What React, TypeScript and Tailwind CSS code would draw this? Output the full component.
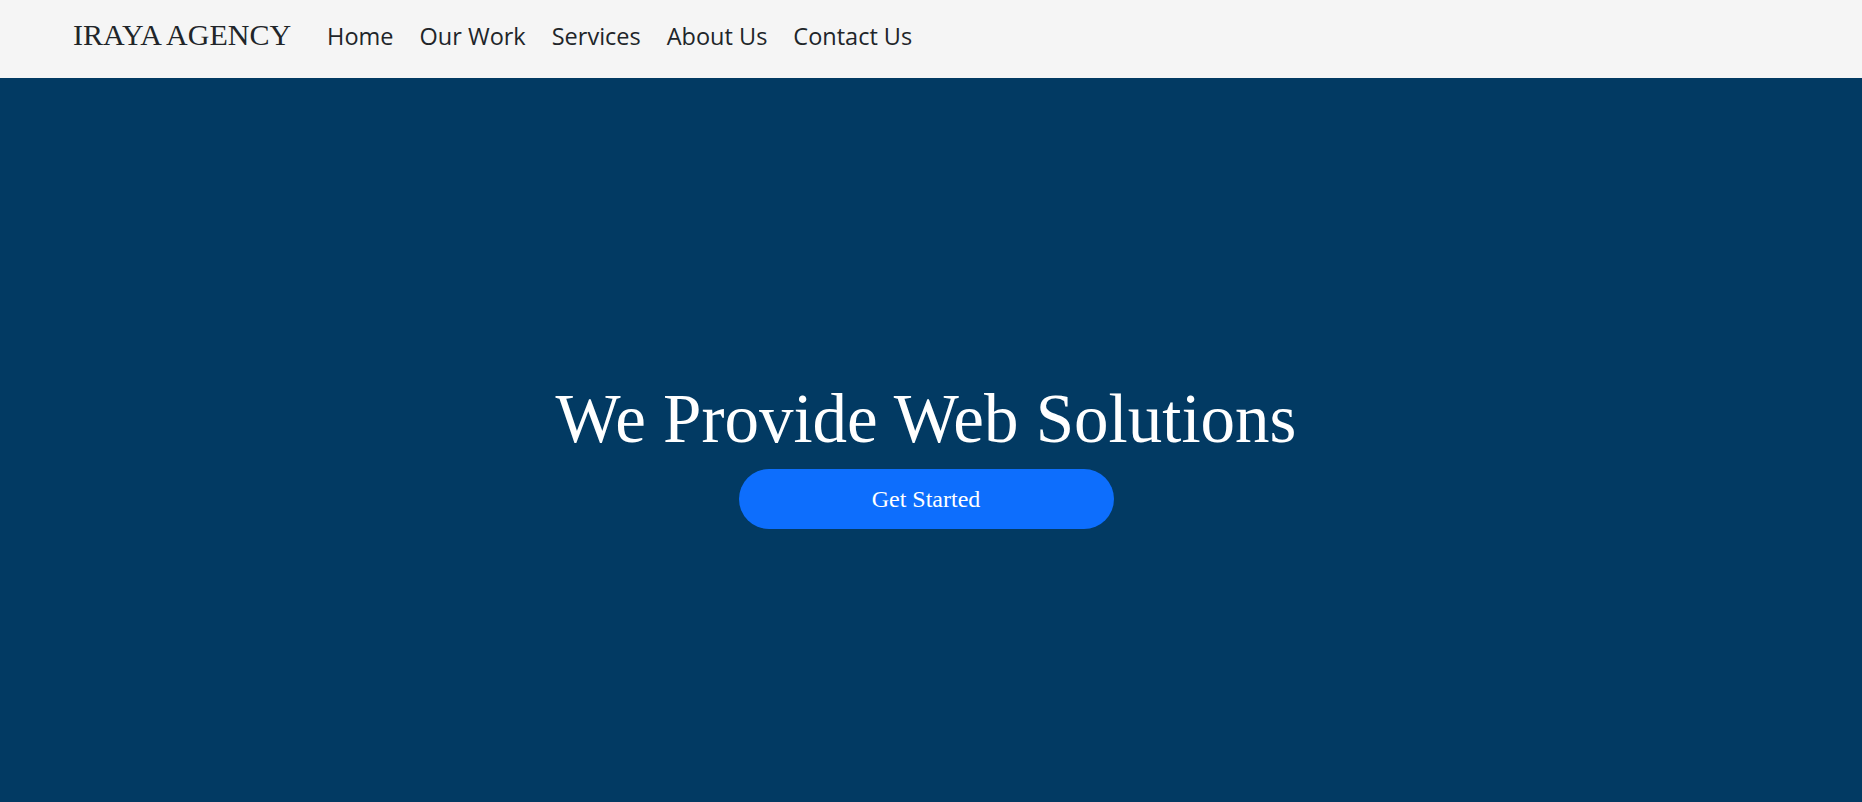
const links = ["Home", "Our Work", "Services", "About Us", "Contact Us"];

const App = () => {
  return (
    <div className="min-h-screen flex flex-col">
      <nav className="bg-[#f5f5f5] h-[78px] flex items-baseline pl-[73px] pt-[18px]">
        <a
          href="#"
          className="text-[30px] leading-[1.1] text-[#212529] font-['Liberation_Serif',serif]"
        >
          IRAYA AGENCY
        </a>
        <ul className="flex items-baseline gap-[26px] ml-[36px] font-['Open_Sans',sans-serif] text-[23.5px] text-[#212529]">
          {links.map((l) => (
            <li key={l}>
              <a href="#">{l}</a>
            </li>
          ))}
        </ul>
      </nav>

      <section className="bg-[#023a63] flex-1 h-[724px] flex flex-col items-center justify-center pt-[27px] pr-[10px]">
        <h1 className="text-white text-[69px] leading-[1.2] font-['Liberation_Serif',serif]">
          We Provide Web Solutions
        </h1>
        <button className="mt-[9px] w-[375px] h-[60px] rounded-full bg-[#0d6efd] text-white text-[24px] font-['Liberation_Serif',serif]">
          Get Started
        </button>
      </section>
    </div>
  );
};

export default App;
